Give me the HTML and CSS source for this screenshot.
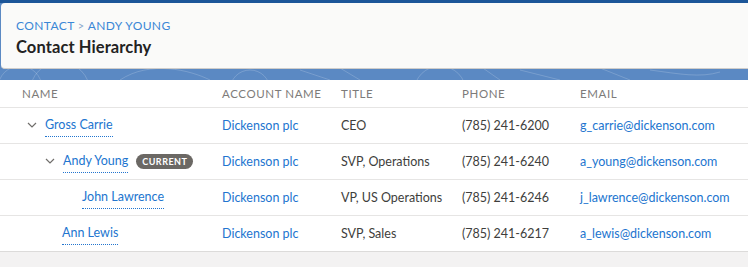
FILE: index.html
```html
<!DOCTYPE html>
<html lang="en">
<head>
    <meta charset="UTF-8">
    <title>Contact Hierarchy</title>
    <link rel="stylesheet" href="styles.css">
</head>
<body>
    <!-- Naglowek na niebieskim tle -->
    <div class="page-band">
        <svg class="band-pattern" width="748" height="80" viewBox="0 0 748 80" preserveAspectRatio="none">
            <g fill="none" stroke="rgba(255,255,255,0.18)" stroke-width="1">
                <circle cx="20" cy="88" r="22"/>
                <circle cx="60" cy="92" r="30"/>
                <path d="M120 80 C150 60 190 70 210 80"/>
                <circle cx="250" cy="90" r="20"/>
                <path d="M300 70 L330 80 M340 68 L360 80"/>
                <circle cx="440" cy="92" r="26"/>
                <path d="M480 66 L500 80 M520 70 L560 80 M600 68 L630 80"/>
                <path d="M650 70 C680 74 700 78 720 72"/>
            </g>
        </svg>
        <header class="header-card">
            <nav class="breadcrumb">CONTACT <span class="sep">&gt;</span> ANDY YOUNG</nav>
            <h1 class="page-title">Contact Hierarchy</h1>
        </header>
    </div>

    <table class="hierarchy">
        <thead>
            <tr>
                <th class="col-name">Name</th>
                <th class="col-account">Account Name</th>
                <th class="col-title">Title</th>
                <th class="col-phone">Phone</th>
                <th class="col-email">Email</th>
            </tr>
        </thead>
        <tbody>
            <tr>
                <td class="col-name">
                    <div class="name-cell level-1">
                        <svg class="chevron" width="10" height="6" viewBox="0 0 10 6"><path d="M1 1 L5 5 L9 1" fill="none" stroke="#706e6b" stroke-width="1.2"/></svg>
                        <a href="#" class="name-link">Gross Carrie</a>
                    </div>
                </td>
                <td><a href="#" class="plain-link">Dickenson plc</a></td>
                <td>CEO</td>
                <td>(785) 241-6200</td>
                <td><a href="#" class="plain-link">g_carrie@dickenson.com</a></td>
            </tr>
            <tr>
                <td class="col-name">
                    <div class="name-cell level-2">
                        <svg class="chevron" width="10" height="6" viewBox="0 0 10 6"><path d="M1 1 L5 5 L9 1" fill="none" stroke="#706e6b" stroke-width="1.2"/></svg>
                        <a href="#" class="name-link">Andy Young</a>
                        <span class="badge">CURRENT</span>
                    </div>
                </td>
                <td><a href="#" class="plain-link">Dickenson plc</a></td>
                <td>SVP, Operations</td>
                <td>(785) 241-6240</td>
                <td><a href="#" class="plain-link">a_young@dickenson.com</a></td>
            </tr>
            <tr>
                <td class="col-name">
                    <div class="name-cell level-3">
                        <a href="#" class="name-link">John Lawrence</a>
                    </div>
                </td>
                <td><a href="#" class="plain-link">Dickenson plc</a></td>
                <td>VP, US Operations</td>
                <td>(785) 241-6246</td>
                <td><a href="#" class="plain-link">j_lawrence@dickenson.com</a></td>
            </tr>
            <tr>
                <td class="col-name">
                    <div class="name-cell level-2 no-toggle">
                        <a href="#" class="name-link">Ann Lewis</a>
                    </div>
                </td>
                <td><a href="#" class="plain-link">Dickenson plc</a></td>
                <td>SVP, Sales</td>
                <td>(785) 241-6217</td>
                <td><a href="#" class="plain-link">a_lewis@dickenson.com</a></td>
            </tr>
        </tbody>
    </table>
</body>
</html>
```

FILE: styles.css
```css
:root {
    --brand-blue: #5b89c3;
    --brand-dark: #1c5699;
    --link: #2275cf;
    --text: #3e3e3c;
    --muted: #7d7b79;
    --line: #e6e5e4;
}

* {
    margin: 0;
    padding: 0;
    box-sizing: border-box;
}

body {
    font-family: 'Lato', 'Open Sans', sans-serif;
    font-size: 12.5px;
    color: var(--text);
    background: #f3f2f2;
    width: 748px;
    height: 267px;
    overflow: hidden;
}

/* Pasek z naglowkiem */
.page-band {
    position: relative;
    background: var(--brand-blue);
    border-top: 3px solid var(--brand-dark);
    padding: 0 0 11px 1px;
    overflow: hidden;
}

.band-pattern {
    position: absolute;
    top: -3px;
    left: 0;
}

.header-card {
    position: relative;
    height: 66px;
    background: #fafaf9;
    border-radius: 4px 0 0 4px;
    border-bottom: 1px solid #cfcdcb;
    padding: 15px 0 0 15px;
}

.breadcrumb {
    font-size: 12px;
    letter-spacing: 0.4px;
    color: #3a87d6;
    line-height: 16px;
}

.breadcrumb .sep {
    color: #8aa9cc;
    font-size: 11px;
}

.page-title {
    font-size: 16.5px;
    font-weight: 700;
    color: #222;
    line-height: 22px;
    margin-top: 2px;
    letter-spacing: 0.1px;
}

/* Tabela hierarchii */
.hierarchy {
    width: 100%;
    border-collapse: collapse;
    background: #fff;
    table-layout: fixed;
}

.hierarchy th {
    height: 27px;
    text-align: left;
    font-weight: 400;
    font-size: 11.5px;
    letter-spacing: 0.6px;
    text-transform: uppercase;
    color: var(--muted);
    border-bottom: 1px solid var(--line);
    vertical-align: middle;
}

.hierarchy td {
    height: 36px;
    border-bottom: 1px solid var(--line);
    vertical-align: middle;
    white-space: nowrap;
}

.hierarchy tbody tr:last-child td {
    border-bottom-color: #dcdbda;
}

.col-name { width: 222px; padding-left: 22px; }
.col-account { width: 119px; }
.col-title { width: 121px; }
.col-phone { width: 118px; }

.name-cell {
    display: flex;
    align-items: center;
    gap: 8px;
}

.level-1 { padding-left: 5px; }
.level-2 { padding-left: 23px; }
.level-3 { padding-left: 60px; }
.no-toggle { padding-left: 40px; }

.chevron {
    flex: none;
}

.name-link {
    color: var(--link);
    text-decoration: none;
    border-bottom: 1px dotted var(--link);
    padding-bottom: 4px;
    margin-top: 3px;
}

.plain-link {
    color: var(--link);
    text-decoration: none;
}

.badge {
    margin-left: 0;
    background: #6b6864;
    color: #fff;
    font-size: 9px;
    font-weight: 700;
    letter-spacing: 0.5px;
    line-height: 15px;
    padding: 0 6px;
    border-radius: 8px;
}
```
